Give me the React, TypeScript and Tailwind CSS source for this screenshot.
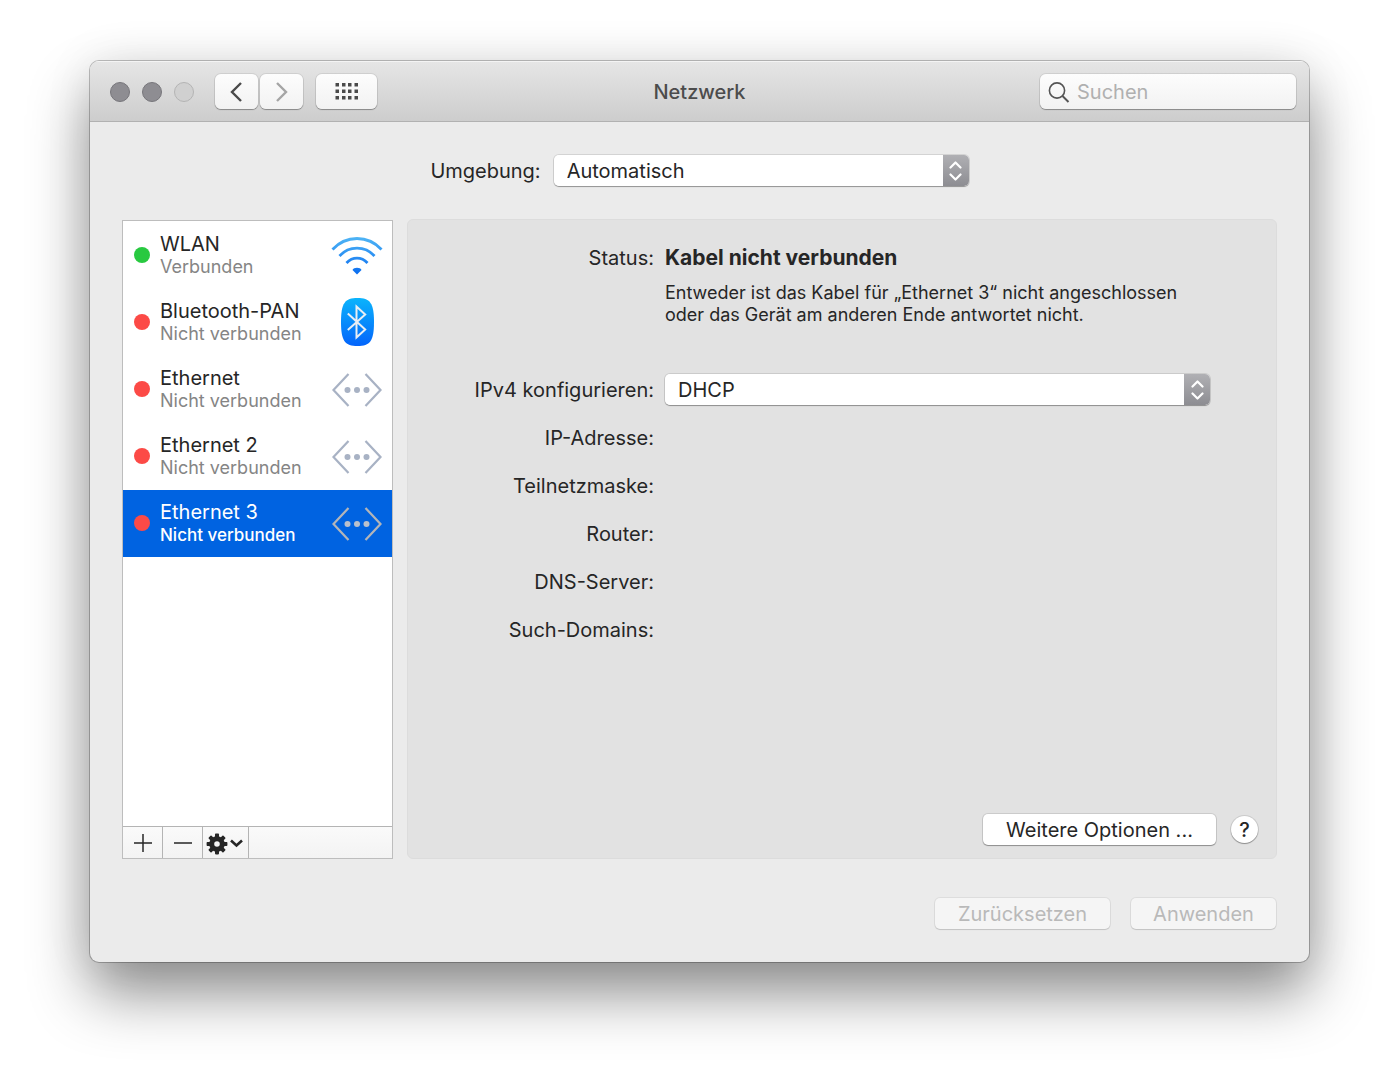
import type { ReactNode } from "react";

type ServiceKind = "wifi" | "bluetooth" | "ethernet";

interface Service {
  name: string;
  status: string;
  connected: boolean;
  kind: ServiceKind;
}

const SERVICES: Service[] = [
  { name: "WLAN", status: "Verbunden", connected: true, kind: "wifi" },
  { name: "Bluetooth-PAN", status: "Nicht verbunden", connected: false, kind: "bluetooth" },
  { name: "Ethernet", status: "Nicht verbunden", connected: false, kind: "ethernet" },
  { name: "Ethernet 2", status: "Nicht verbunden", connected: false, kind: "ethernet" },
  { name: "Ethernet 3", status: "Nicht verbunden", connected: false, kind: "ethernet" },
];

const SELECTED = "Ethernet 3";

const DETAILS = ["IP-Adresse:", "Teilnetzmaske:", "Router:", "DNS-Server:", "Such-Domains:"];

export default function App() {
  return (
    <div className="min-h-screen bg-white pt-[61px] pr-[89px] pb-[118px] pl-[90px] font-['Inter',sans-serif] text-[20px] leading-6 text-[#262626]">
      <main className="overflow-hidden rounded-[9px] bg-[#ebebeb] shadow-[0_0_0_1px_rgba(0,0,0,0.24),0_32px_60px_rgba(0,0,0,0.44),0_0_50px_rgba(0,0,0,0.08)]">
        <TitleBar />

        <div className="px-8 py-[33px]">
          {/* Location */}
          <div className="flex items-center justify-center gap-[13px]">
            <label htmlFor="location">Umgebung:</label>
            <div className="w-[415px]">
              <PopUp id="location" value="Automatisch" />
            </div>
          </div>

          <div className="mt-[33px] flex gap-[14px]">
            <ServiceList />
            <DetailPanel />
          </div>

          {/* Footer */}
          <div className="mt-[39px] flex justify-end gap-[21px] pr-px">
            <PushButton disabled className="w-[175px]">Zurücksetzen</PushButton>
            <PushButton disabled className="w-[145px]">Anwenden</PushButton>
          </div>
        </div>
      </main>
    </div>
  );
}

function TitleBar() {
  const tool =
    "flex h-[35px] items-center justify-center rounded-md bg-linear-to-b from-[#fdfdfd] to-[#f2f2f2] shadow-[0_0_0_1px_rgba(0,0,0,0.08),0_1px_1px_rgba(0,0,0,0.3)]";

  return (
    <header className="grid h-[61px] grid-cols-[1fr_auto_1fr] items-center border-b border-[#b1b1b1] bg-linear-to-b from-[#e6e6e6] to-[#cdcdcd] px-[13px] pt-px shadow-[inset_0_1px_0_#f4f4f4]">
      <div className="flex items-center pl-[7px]">
        <div className="mr-[21px] flex gap-3">
          <button aria-label="Schließen" className="size-5 rounded-full border border-[#77767b] bg-[#8e8d92]" />
          <button aria-label="Minimieren" className="size-5 rounded-full border border-[#77767b] bg-[#8e8d92]" />
          <button aria-label="Zoomen" disabled className="size-5 rounded-full border border-[#b4b4b4] bg-[#d0d0d0]" />
        </div>
        <button aria-label="Zurück" className={`${tool} mr-[2px] w-[43px] pr-[2px]`}>
          <svg width="12" height="20" viewBox="0 0 12 20" fill="none" stroke="#4a4a4a" strokeWidth="2.4">
            <path d="M11 1 2 10l9 9" />
          </svg>
        </button>
        <button aria-label="Vorwärts" className={`${tool} mr-[13px] w-[43px]`}>
          <svg width="12" height="20" viewBox="0 0 12 20" fill="none" stroke="#a5a5a5" strokeWidth="2.4">
            <path d="m1 1 9 9-9 9" />
          </svg>
        </button>
        <button aria-label="Alle einblenden" className={`${tool} w-[61px]`}>
          <svg width="24" height="17" viewBox="0 0 24 17" fill="#4a4a4a">
            {[0, 6.5, 13].map((y) =>
              [0.5, 7, 13, 19.5].map((x) => <rect key={`${x}-${y}`} x={x} y={y} width="3.5" height="3.5" />)
            )}
          </svg>
        </button>
      </div>

      <h1 className="font-medium text-[#4c4c4c]">Netzwerk</h1>

      <label className={`${tool} w-64 justify-start! justify-self-end px-2`}>
        <svg width="22" height="22" viewBox="0 0 22 22" fill="none" stroke="#555" strokeWidth="1.6" className="mr-[7px] shrink-0">
          <circle cx="9" cy="9.5" r="7.6" />
          <path d="m14.5 15 6 6" strokeWidth="2" />
        </svg>
        <input
          type="search"
          aria-label="Suchen"
          placeholder="Suchen"
          className="min-w-0 flex-1 bg-transparent outline-none placeholder:text-[#b0b0b0]"
        />
      </label>
    </header>
  );
}

function ServiceList() {
  return (
    <section className="mt-px flex w-[271px] flex-col border border-[#bdbdbd] bg-white">
      <ul className="flex-1 pt-px">
        {SERVICES.map((service) => {
          const selected = service.name === SELECTED;
          return (
            <li key={service.name}>
              <button
                className={`flex h-[67px] w-full items-center pr-[9px] pb-[2px] pl-[11px] text-left ${
                  selected ? "bg-[#0063e1] text-white" : ""
                }`}
              >
                <span
                  className={`mr-[10px] size-4 shrink-0 rounded-full ${service.connected ? "bg-[#28c940]" : "bg-[#fc4a46]"}`}
                />
                <span className="flex-1 whitespace-nowrap">
                  <span className="block">{service.name}</span>
                  <span
                    className={`block leading-[22px] ${
                      selected ? "text-[17px] font-medium" : "text-[18px] text-[#858585]"
                    }`}
                  >
                    {service.status}
                  </span>
                </span>
                <ServiceIcon kind={service.kind} selected={selected} />
              </button>
            </li>
          );
        })}
      </ul>

      {/* Add / remove / actions */}
      <div className="flex h-8 border-t border-[#b4b4b4] bg-linear-to-b from-[#fafafa] to-[#f3f3f3]">
        <button aria-label="Hinzufügen" className="flex w-10 items-center justify-center border-r border-[#b4b4b4]">
          <svg width="18" height="18" viewBox="0 0 18 18" stroke="#262626" strokeWidth="1.5">
            <path d="M9 0v18M0 9h18" />
          </svg>
        </button>
        <button aria-label="Entfernen" className="flex w-10 items-center justify-center border-r border-[#b4b4b4]">
          <svg width="18" height="18" viewBox="0 0 18 18" stroke="#262626" strokeWidth="1.5">
            <path d="M0 9h18" />
          </svg>
        </button>
        <button aria-label="Aktionen" className="flex w-[46px] items-center justify-center gap-[2px] border-r border-[#b4b4b4] pt-[3px] pr-[2px]">
          <svg width="22" height="22" viewBox="-11 -11 22 22" fill="#262626">
            {[0, 45, 90, 135, 180, 225, 270, 315].map((deg) => (
              <rect key={deg} x="-2" y="-10.4" width="4" height="5" rx="0.8" transform={`rotate(${deg})`} />
            ))}
            <circle r="5.3" fill="none" stroke="#262626" strokeWidth="5" />
          </svg>
          <svg width="13" height="9" viewBox="0 0 13 9" fill="none" stroke="#262626" strokeWidth="2.6" className="mb-[2px]">
            <path d="m1 1.5 5.5 5 5.5-5" />
          </svg>
        </button>
      </div>
    </section>
  );
}

function DetailPanel() {
  return (
    <section className="flex min-h-[640px] flex-1 flex-col rounded-md border border-[#dcdcdc] bg-[#e2e2e2] pt-[26px] pr-[18px] pb-[13px]">
      <dl className="grid grid-cols-[246px_1fr] gap-x-[11px] pr-12">
        <dt className="text-right">Status:</dt>
        <dd>
          <p className="text-[21px] font-bold">Kabel nicht verbunden</p>
          <p className="mt-3 text-[18px] leading-[22px]">
            Entweder ist das Kabel für „Ethernet 3“ nicht angeschlossen
            <br />
            oder das Gerät am anderen Ende antwortet nicht.
          </p>
        </dd>

        <dt className="mt-12 self-center text-right">
          <label htmlFor="ipv4">IPv4 konfigurieren:</label>
        </dt>
        <dd className="mt-12">
          <PopUp id="ipv4" value="DHCP" />
        </dd>

        {DETAILS.map((label, i) => (
          <dt key={label} className={`col-start-1 text-right ${i === 0 ? "mt-[21px]" : "mt-6"}`}>
            {label}
          </dt>
        ))}
      </dl>

      <div className="mt-auto flex items-center justify-end gap-[15px]">
        <PushButton className="w-[233px]">Weitere Optionen ...</PushButton>
        <button
          aria-label="Hilfe"
          className="size-[27px] rounded-full bg-white font-medium shadow-[0_0_0_1px_rgba(0,0,0,0.1),0_1px_1px_rgba(0,0,0,0.3)]"
        >
          ?
        </button>
      </div>
    </section>
  );
}

function PopUp({ id, value }: { id: string; value: string }) {
  return (
    <div className="relative rounded-[5px] shadow-[0_0_0_1px_rgba(0,0,0,0.1),0_1px_1px_rgba(0,0,0,0.3)]">
      <select id={id} defaultValue={value} className="block h-[31px] w-full appearance-none rounded-[5px] bg-white pr-8 pl-[13px]">
        <option>{value}</option>
      </select>
      <span className="pointer-events-none absolute inset-y-0 right-0 flex w-[26px] items-center justify-center rounded-r-[5px] bg-linear-to-b from-[#b0b0b4] to-[#8d8d92]">
        <svg width="13" height="20" viewBox="0 0 13 20" fill="none" stroke="#fff" strokeWidth="2.2" strokeLinecap="round" strokeLinejoin="round">
          <path d="m1.5 6.500 5-5 5 5M1.500 13.500l5 5 5-5" />
        </svg>
      </span>
    </div>
  );
}

function PushButton({ children, disabled, className }: { children: ReactNode; disabled?: boolean; className: string }) {
  return (
    <button
      disabled={disabled}
      className={`h-[31px] rounded-[5px] ${className} ${
        disabled
          ? "bg-[#f5f5f5] text-[#b9b9b9] shadow-[0_0_0_1px_rgba(0,0,0,0.06),0_1px_1px_rgba(0,0,0,0.12)]"
          : "bg-white shadow-[0_0_0_1px_rgba(0,0,0,0.1),0_1px_1px_rgba(0,0,0,0.3)]"
      }`}
    >
      {children}
    </button>
  );
}

function ServiceIcon({ kind, selected }: { kind: ServiceKind; selected: boolean }) {
  if (kind === "wifi") {
    return (
      <svg width="52" height="50" viewBox="0 0 52 50" fill="none" className="shrink-0">
        <defs>
          <linearGradient id="wifi" x1="0" y1="7" x2="0" y2="44" gradientUnits="userSpaceOnUse">
            <stop stopColor="#4fb5f5" />
            <stop offset="1" stopColor="#0a6df0" />
          </linearGradient>
        </defs>
        <g stroke="url(#wifi)" strokeWidth="2.8">
          <path d="M1.500 19.500C15 4.800 37 4.800 50.500 19.500" />
          <path d="M8.500 26C18 15.500 34 15.500 43.500 26" />
          <path d="M15.500 33C21.500 26.500 30.500 26.500 36.500 33" />
        </g>
        <path d="M21.500 40C22.500 37 29.500 37 30.500 40L26 44.500Z" fill="url(#wifi)" />
      </svg>
    );
  }

  if (kind === "bluetooth") {
    return (
      <svg width="52" height="50" viewBox="0 0 52 50" fill="none" className="shrink-0">
        <defs>
          <linearGradient id="bluetooth" x1="0" y1="1" x2="0" y2="49" gradientUnits="userSpaceOnUse">
            <stop stopColor="#0bb4fc" />
            <stop offset="1" stopColor="#0364fb" />
          </linearGradient>
        </defs>
        <path
          d="M26.500 1C39 1 43 6 43 25S39 49 26.500 49 10 44 10 25 14 1 26.500 1Z"
          fill="url(#bluetooth)"
        />
        <path d="m16.800 16.500 17.400 16-8.700 8V9.500l8.700 8-17.400 15.500" stroke="#e8eef4" strokeWidth="2" />
      </svg>
    );
  }

  return (
    <svg width="52" height="50" viewBox="0 0 52 50" fill="none" className="shrink-0">
      <path
        d="M17.500 10 2.500 26l15 16M34.500 10l15 16-15 16"
        stroke={selected ? "#b3b5b9" : "#a8b2c4"}
        strokeWidth="2.2"
      />
      <g fill={selected ? "#b9c0cc" : "#a8b2c4"}>
        <circle cx="16.500" cy="26" r="3" />
        <circle cx="26" cy="26" r="3" />
        <circle cx="35.500" cy="26" r="3" />
      </g>
    </svg>
  );
}
